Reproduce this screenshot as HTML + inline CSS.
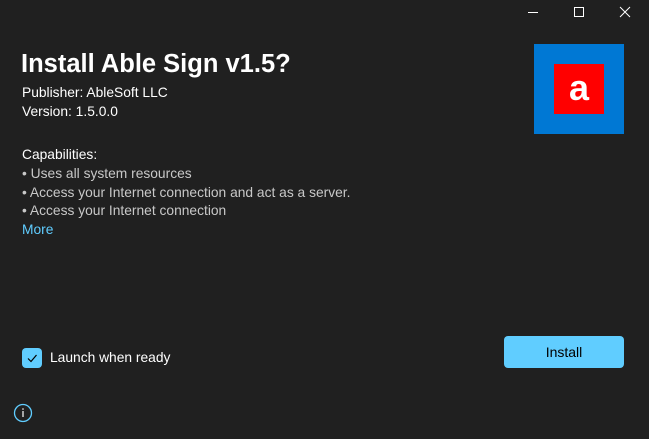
<!DOCTYPE html>
<html><head><style>
body{margin:0;width:649px;height:439px;background:#202020;font-family:"Segoe UI","Liberation Sans",sans-serif;color:#fff;position:relative;overflow:hidden}
.a{position:absolute;white-space:nowrap}
.t{font-size:13.8px;line-height:19px}
.g{color:#c8c8c8}
</style></head><body>
<svg class="a" style="left:0;top:0" width="649" height="30">
<line x1="528" y1="12.5" x2="538" y2="12.5" stroke="#fff" stroke-width="1"/>
<rect x="574.5" y="7.5" width="9" height="9" fill="none" stroke="#fff"/>
<path d="M620 7L630 17M630 7L620 17" stroke="#fff" stroke-width="1"/>
</svg>
<div class="a" style="left:21px;top:46px;font-size:25.5px;font-weight:bold;line-height:36px">Install Able Sign v1.5?</div>
<div class="a t" style="left:22px;top:83px">Publisher: AbleSoft LLC</div>
<div class="a t" style="left:22px;top:102px">Version: 1.5.0.0</div>
<div class="a t" style="left:22px;top:145px">Capabilities:</div>
<div class="a t g" style="left:22px;top:164px">• Uses all system resources</div>
<div class="a t g" style="left:22px;top:183px">• Access your Internet connection and act as a server.</div>
<div class="a t g" style="left:22px;top:201px">• Access your Internet connection</div>
<div class="a t" style="left:22px;top:220px;color:#60cdff">More</div>
<div class="a" style="left:534px;top:44px;width:90px;height:90px;background:#0078d4"></div>
<div class="a" style="left:554px;top:64px;width:50px;height:50px;background:#f00;color:#fff;font-size:36px;font-weight:bold;text-align:center;line-height:48px">a</div>
<div class="a" style="left:22px;top:348px;width:20px;height:20px;background:#60cdff;border-radius:4px"></div>
<svg class="a" style="left:22px;top:348px" width="20" height="20"><path d="M6 10.5L9 13.5L14.5 7" fill="none" stroke="#000" stroke-width="1.2"/></svg>
<div class="a t" style="left:50px;top:348px">Launch when ready</div>
<div class="a" style="left:504px;top:336px;width:120px;height:32px;background:#60cdff;border-radius:4px;color:#000;font-size:14px;text-align:center;line-height:32px">Install</div>
<svg class="a" style="left:12px;top:402px" width="22" height="22"><circle cx="11" cy="11" r="8.5" fill="none" stroke="#60cdff" stroke-width="1.3"/><line x1="11" y1="9" x2="11" y2="15" stroke="#fff" stroke-width="1.2"/><circle cx="11" cy="7" r="0.8" fill="#fff"/></svg>
</body></html>
